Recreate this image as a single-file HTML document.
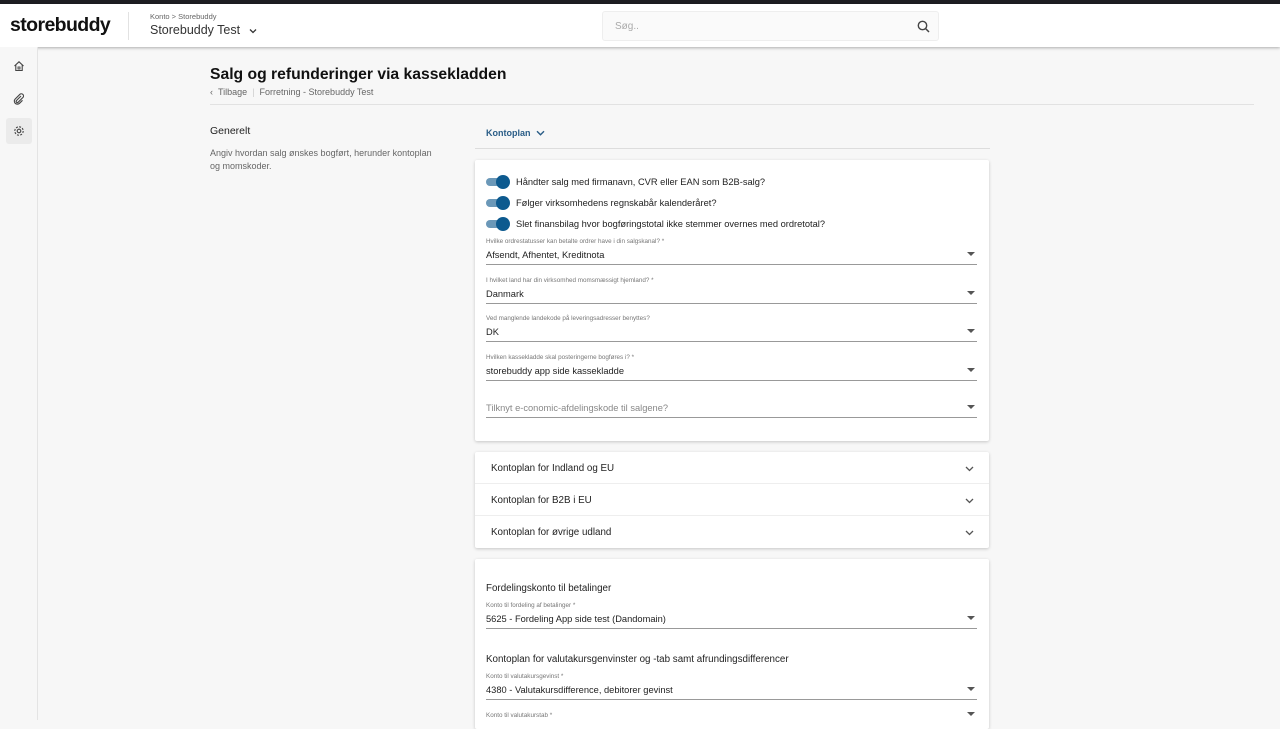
<!DOCTYPE html>
<html><head><meta charset="utf-8"><style>
*{box-sizing:border-box;margin:0;padding:0}
body{width:1280px;height:720px;overflow:hidden;background:#f7f7f7;font-family:"Liberation Sans",sans-serif;color:#222;position:relative}
.top{position:absolute;left:0;top:0;width:1280px;height:4px;background:#1e1e22}
.hdr{position:absolute;left:0;top:4px;width:1280px;height:43px;background:#fff;box-shadow:0 1px 3px rgba(0,0,0,.3)}
.logo{position:absolute;left:10px;top:10px;font-size:19.5px;font-weight:bold;letter-spacing:-.6px;color:#111}
.vsep{position:absolute;left:128px;top:8px;width:1px;height:28px;background:#e2e2e2}
.crumb{position:absolute;left:150px;top:8px;font-size:7.5px;color:#666}
.acct{position:absolute;left:150px;top:19px;font-size:12.5px;color:#333}
.search{position:absolute;left:602px;top:7px;width:337px;height:30px;background:#fafafa;border:1px solid #eee;border-radius:3px;font-size:10px;color:#aaa;padding:9px 0 0 12px}
.side{position:absolute;left:0;top:47px;width:38px;height:673px;background:#f7f7f7;border-right:1px solid #e4e4e4}
.ic{position:absolute;left:6px;width:26px;height:26px;border-radius:3px}
.ic svg{position:absolute;left:7px;top:7px}
h1{position:absolute;left:210px;top:66px;font-size:15.7px;font-weight:bold;color:#111}
.back{position:absolute;left:210px;top:87px;font-size:9px;color:#666}
.hl{position:absolute;left:210px;top:104px;width:1044px;height:1px;background:#e2e2e2}
.gen{position:absolute;left:210px;top:125px;font-size:10.5px;color:#222}
.gdesc{position:absolute;left:210px;top:147px;font-size:9px;color:#666;line-height:13px;width:230px}
.kp{position:absolute;left:486px;top:128px;font-size:9px;color:#2a5d87;font-weight:bold}
.kpl{position:absolute;left:475px;top:148px;width:515px;height:1px;background:#ddd}
.card{position:absolute;left:475px;width:514px;background:#fff;box-shadow:0 1px 3px rgba(0,0,0,.2);border-radius:2px}
.tg{position:absolute;left:11px;font-size:9.3px;color:#222;line-height:12px}
.tg i{position:absolute;left:0;top:2px;width:22px;height:8px;border-radius:4px;background:#6b98b8}
.tg i:after{content:"";position:absolute;left:10px;top:-3px;width:14px;height:14px;border-radius:50%;background:#0d5a8f}
.tg span{margin-left:30px}
.fld{position:absolute;left:11px;width:491px;border-bottom:1px solid #999}
.fld .l{font-size:6.3px;color:#777;margin-bottom:5px}
.fld .v{font-size:9.3px;color:#222;padding-bottom:4px}
.fld .v.p{color:#888}
.fld:after{content:"";position:absolute;right:2px;bottom:8px;border:4px solid transparent;border-top:4px solid #555;border-bottom:0}
.row{position:absolute;left:0;width:514px;height:32px;border-bottom:1px solid #eee;font-size:9.8px;padding:11px 0 0 16px}
.row svg{position:absolute;right:15px;top:14px}
.sec{position:absolute;left:11px;font-size:9.8px;color:#222}
</style></head><body>
<div class="top"></div>
<div class="hdr"><div class="logo">storebuddy</div><div class="vsep"></div>
<div class="crumb">Konto &gt; Storebuddy</div><div class="acct">Storebuddy Test &nbsp;<svg width="8" height="6" viewBox="0 0 8 6" style="margin-left:2px"><path d="M1 1.5l3 3 3-3" fill="none" stroke="#333" stroke-width="1.3"/></svg></div>
<div class="search">Søg..<svg style="position:absolute;right:8px;top:8px" width="13" height="13" viewBox="0 0 13 13"><circle cx="5.5" cy="5.5" r="4.2" fill="none" stroke="#444" stroke-width="1.4"/><path d="M8.5 8.5L12 12" stroke="#444" stroke-width="1.5"/></svg></div></div>
<div class="side">
<div class="ic" style="top:6px"><svg width="12" height="12" viewBox="0 0 12 12"><path d="M1.5 6L6 1.8 10.5 6M2.8 5v5.5h6.4V5" fill="none" stroke="#444" stroke-width="1.1"/><rect x="5" y="7" width="2" height="2" fill="none" stroke="#444" stroke-width=".9"/></svg></div>
<div class="ic" style="top:39px"><svg width="12" height="12" viewBox="0 0 12 12"><path d="M8 3L3.5 7.5a1.2 1.2 0 0 0 1.7 1.7L10 4.4a2.2 2.2 0 0 0-3.1-3.1L2.2 6a3 3 0 0 0 4.3 4.3L9.5 7.3" fill="none" stroke="#444" stroke-width="1.1"/></svg></div>
<div class="ic" style="top:71px;background:#ebebeb"><svg width="12" height="12" viewBox="0 0 12 12"><circle cx="6" cy="6" r="1.8" fill="none" stroke="#444" stroke-width="1.1"/><circle cx="6" cy="6" r="4.2" fill="none" stroke="#444" stroke-width="1.1" stroke-dasharray="2 1.3"/></svg></div></div>
<h1>Salg og refunderinger via kassekladden</h1>
<div class="back">‹ &nbsp;Tilbage &nbsp;<span style="color:#ccc">|</span>&nbsp; Forretning - Storebuddy Test</div>
<div class="hl"></div>
<div class="gen">Generelt</div>
<div class="gdesc">Angiv hvordan salg ønskes bogført, herunder kontoplan og momskoder.</div>
<div class="kp">Kontoplan &nbsp;<svg width="9" height="6" viewBox="0 0 9 6"><path d="M1 1.2l3.5 3.5L8 1.2" fill="none" stroke="#2a5d87" stroke-width="1.4"/></svg></div><div class="kpl"></div>
<div class="card" style="top:160px;height:281px">
<div class="tg" style="top:16px"><i></i><span>Håndter salg med firmanavn, CVR eller EAN som B2B-salg?</span></div>
<div class="tg" style="top:37px"><i></i><span>Følger virksomhedens regnskabår kalenderåret?</span></div>
<div class="tg" style="top:58px"><i></i><span>Slet finansbilag hvor bogføringstotal ikke stemmer overnes med ordretotal?</span></div>
<div class="fld" style="top:78px"><div class="l">Hvilke ordrestatusser kan betalte ordrer have i din salgskanal? *</div><div class="v">Afsendt, Afhentet, Kreditnota</div></div>
<div class="fld" style="top:117px"><div class="l">I hvilket land har din virksomhed momsmæssigt hjemland? *</div><div class="v">Danmark</div></div>
<div class="fld" style="top:155px"><div class="l">Ved manglende landekode på leveringsadresser benyttes?</div><div class="v">DK</div></div>
<div class="fld" style="top:194px"><div class="l">Hvilken kassekladde skal posteringerne bogføres i? *</div><div class="v">storebuddy app side kassekladde</div></div>
<div class="fld" style="top:243px"><div class="v p">Tilknyt e-conomic-afdelingskode til salgene?</div></div>
</div>
<div class="card" style="top:452px;height:96px">
<div class="row" style="top:0">Kontoplan for Indland og EU<svg width="9" height="6" viewBox="0 0 9 6"><path d="M1 1l3.5 3.5L8 1" fill="none" stroke="#555" stroke-width="1.3"/></svg></div>
<div class="row" style="top:32px">Kontoplan for B2B i EU<svg width="9" height="6" viewBox="0 0 9 6"><path d="M1 1l3.5 3.5L8 1" fill="none" stroke="#555" stroke-width="1.3"/></svg></div>
<div class="row" style="top:64px;border:0">Kontoplan for øvrige udland<svg width="9" height="6" viewBox="0 0 9 6"><path d="M1 1l3.5 3.5L8 1" fill="none" stroke="#555" stroke-width="1.3"/></svg></div>
</div>
<div class="card" style="top:559px;height:170px">
<div class="sec" style="top:24px">Fordelingskonto til betalinger</div>
<div class="fld" style="top:43px"><div class="l">Konto til fordeling af betalinger *</div><div class="v">5625 - Fordeling App side test (Dandomain)</div></div>
<div class="sec" style="top:95px">Kontoplan for valutakursgenvinster og -tab samt afrundingsdifferencer</div>
<div class="fld" style="top:114px"><div class="l">Konto til valutakursgevinst *</div><div class="v">4380 - Valutakursdifference, debitorer gevinst</div></div>
<div class="fld" style="top:153px;border:0"><div class="l">Konto til valutakurstab *</div></div>
</div>
</body></html>
